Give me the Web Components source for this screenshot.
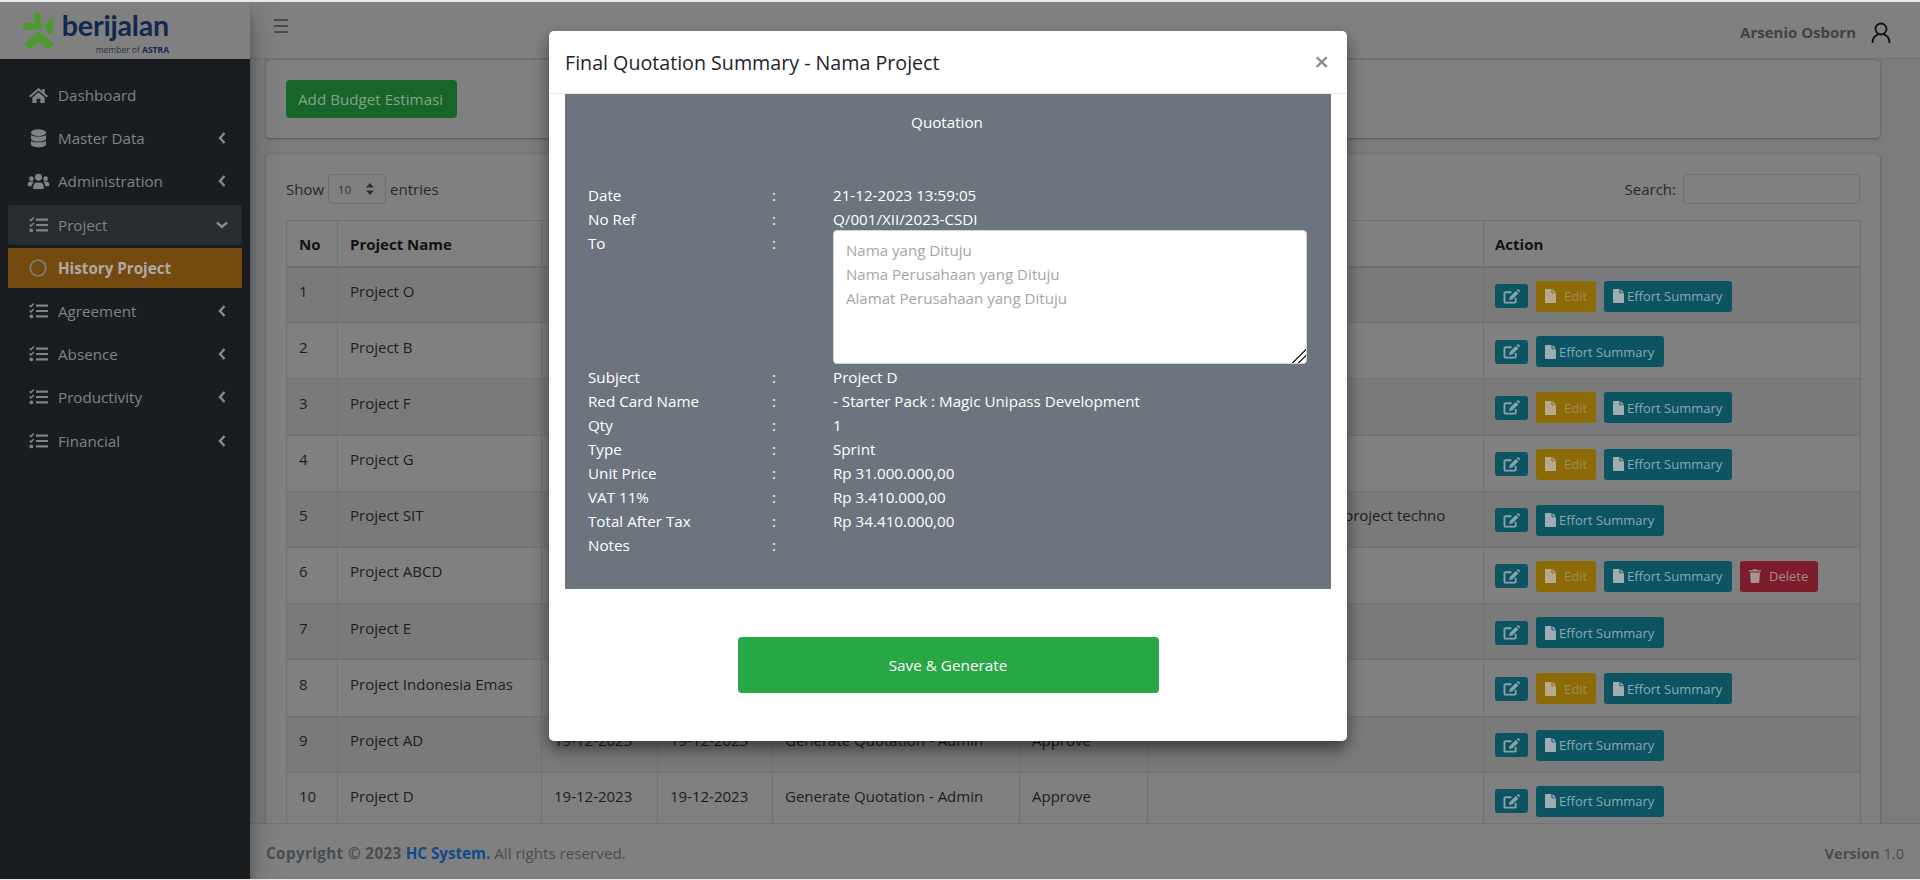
<!DOCTYPE html>
<html>
<head>
<meta charset="utf-8">
<title>Budget Estimasi</title>
<style>
  html, body { margin: 0; height: 100%; overflow: hidden; background: #e8e8e8; }
  body { font-family: "Open Sans", "Noto Sans", sans-serif; font-size: 15px; color: #1b1e21; }
</style>
</head>
<body>
<app-shell>
  <side-bar slot="sidebar">
    <nav-item icon="home">Dashboard</nav-item>
    <nav-item icon="database" arrow="left">Master Data</nav-item>
    <nav-item icon="users" arrow="left">Administration</nav-item>
    <nav-item icon="tasks" arrow="down" state="open">Project</nav-item>
    <nav-item icon="circle" state="active">History Project</nav-item>
    <nav-item icon="tasks" arrow="left">Agreement</nav-item>
    <nav-item icon="tasks" arrow="left">Absence</nav-item>
    <nav-item icon="tasks" arrow="left">Productivity</nav-item>
    <nav-item icon="tasks" arrow="left">Financial</nav-item>
  </side-bar>
  <top-bar slot="topbar">Arsenio Osborn</top-bar>
  <page-content slot="content">
    <ui-card><add-button>Add Budget Estimasi</add-button></ui-card>
    <ui-card>
      <entries-bar></entries-bar>
      <project-table></project-table>
    </ui-card>
  </page-content>
  <app-footer slot="footer"></app-footer>
</app-shell>

<quote-modal heading="Final Quotation Summary - Nama Project">
  <quote-row label="Date">21-12-2023 13:59:05</quote-row>
  <quote-row label="No Ref">Q/001/XII/2023-CSDI</quote-row>
  <quote-row label="To" tall>
    <address-box>
      <div>Nama yang Dituju</div>
      <div>Nama Perusahaan yang Dituju</div>
      <div>Alamat Perusahaan yang Dituju</div>
    </address-box>
  </quote-row>
  <quote-row label="Subject">Project D</quote-row>
  <quote-row label="Red Card Name">- Starter Pack : Magic Unipass Development</quote-row>
  <quote-row label="Qty">1</quote-row>
  <quote-row label="Type">Sprint</quote-row>
  <quote-row label="Unit Price">Rp 31.000.000,00</quote-row>
  <quote-row label="VAT 11%">Rp 3.410.000,00</quote-row>
  <quote-row label="Total After Tax">Rp 34.410.000,00</quote-row>
  <quote-row label="Notes"></quote-row>
</quote-modal>

<script>
const ICONS = {
  home: '<svg viewBox="0 0 22 18" width="21" height="17"><path d="M11 1 1 9.5l1.3 1.5L11 3.6l8.7 7.4L21 9.500l-3.500-3V2h-2.600v2.200z"/><path d="M4.500 11 11 5.600 17.500 11v6H13v-4.500H9V17H4.500z"/></svg>',
  database: '<svg viewBox="0 0 18 20" width="17" height="19"><ellipse cx="9" cy="3.800" rx="8" ry="3.500"/><path d="M1 6.300c2 2.200 14 2.200 16 0V10c0 1.900-3.500 3.300-8 3.300S1 11.900 1 10z"/><path d="M1 12.300c2 2.200 14 2.200 16 0v3.900c0 1.900-3.500 3.300-8 3.300s-8-1.400-8-3.300z"/></svg>',
  users: '<svg viewBox="0 0 24 18" width="23" height="17"><circle cx="12" cy="4.500" r="3.700"/><circle cx="4.500" cy="6" r="2.500"/><circle cx="19.500" cy="6" r="2.500"/><path d="M6.500 17v-2.500c0-3 2-4.500 4-4.500h3c2 0 4 1.500 4 4.500V17z"/><path d="M.5 12.500c0-2 1-3.500 3-3.500h2c.6 0 1.200.2 1.600.5-1.500 1.100-2.300 2.800-2.300 4.500H1.500c-.6 0-1-.5-1-1.500z"/><path d="M23.500 12.500c0-2-1-3.500-3-3.500h-2c-.6 0-1.200.2-1.600.5 1.500 1.100 2.300 2.800 2.300 4.500h3.300c.6 0 1-.5 1-1.500z"/></svg>',
  tasks: '<svg viewBox="0 0 19 16" width="19" height="16"><path d="M7 1.500h12v2.200H7zM7 6.900h12v2.200H7zM7 12.300h12v2.200H7z"/><path d="M.6 2.200 2 3.600 4.800.6M.6 7.600 2 9 4.800 6" fill="none" stroke="currentColor" stroke-width="1.500"/><circle cx="2.300" cy="13.400" r="1.900"/></svg>',
  circle: '<svg viewBox="0 0 18 18" width="18" height="18"><circle cx="9" cy="9" r="7.800" fill="none" stroke="currentColor" stroke-width="1.800"/></svg>',
  edit: '<svg viewBox="0 0 18 16" width="17" height="15"><path d="M13.500 9.500v4a1 1 0 0 1-1 1H2.500a1 1 0 0 1-1-1V4.500a1 1 0 0 1 1-1h6.500" fill="none" stroke="currentColor" stroke-width="2"/><path d="M6.500 11.800 7 8.600 13.700 2l2.700 2.700-6.700 6.600zM14.600 1.200l.8-.8a1 1 0 0 1 1.300 0l1 1a1 1 0 0 1 0 1.300l-.8.800z"/></svg>',
  file: '<svg viewBox="0 0 11 14" width="11" height="14"><path d="M0 1a1 1 0 0 1 1-1h5.500v3.500a.8.8 0 0 0 .8.800H11V13a1 1 0 0 1-1 1H1a1 1 0 0 1-1-1z"/><path d="M7.500 0 11 3.400H7.500z"/></svg>',
  trash: '<svg viewBox="0 0 12 14" width="12" height="14"><path d="M1 3.500h10L10.300 13a1 1 0 0 1-1 1H2.700a1 1 0 0 1-1-1zM0 1.300h3.800l.5-1h3.400l.5 1H12v1.300H0z"/></svg>'
};

// every element renders once, when it lands in the page
class ShadowBase extends HTMLElement {
  connectedCallback() {
    if (this.shadowRoot) return;
    this.attachShadow({ mode: 'open' }).innerHTML = this.render();
  }
}

class AppShell extends ShadowBase {
  render() {
    return `<style>
      :host { display: grid; grid-template-columns: 250px 1fr; grid-template-rows: 57px 1fr 56px; height: 877px; margin-top: 2px; background: #7a7b7c; overflow: hidden; }
      ::slotted([slot=sidebar]) { grid-row: 1 / 4; grid-column: 1; z-index: 2; }
      ::slotted([slot=topbar]) { grid-row: 1; grid-column: 2; }
      ::slotted([slot=content]) { grid-row: 2; grid-column: 2; }
      ::slotted([slot=footer]) { grid-row: 3; grid-column: 2; }
    </style><slot name="sidebar"></slot><slot name="topbar"></slot><slot name="content"></slot><slot name="footer"></slot>`;
  }
}

class SideBar extends ShadowBase {
  render() {
    return `<style>
      :host { display: flex; flex-direction: column; background: #1a1d20; box-shadow: 0 14px 28px rgba(0,0,0,.25), 0 10px 10px rgba(0,0,0,.22); }
      .brand { height: 57px; background: #808080; display: flex; gap: 7px; padding-left: 23px; box-sizing: border-box; }
      .mark { margin-top: 10px; }
      .words { display: flex; flex-direction: column; align-items: flex-end; width: 107px; }
      .name { font: 700 28.600px/32px Lato, sans-serif; color: #12294f; margin-top: 7px; letter-spacing: -.2px; }
      .member { font: 400 8.500px/12px "Open Sans", sans-serif; color: #2a3242; margin-top: 3px; }
      .member b { color: #12294f; }
      nav { display: flex; flex-direction: column; gap: 3.200px; padding: 16px 8px; }
    </style>
    <div class="brand">
      <svg class="mark" width="32" height="38" viewBox="0 0 32 38" fill="#4f9a30">
        <path d="M11 1h7v17h-8.500v-6H11z"/><path d="M0 11h11v7H0z"/>
        <path d="M30 4v18h-4.500L21 14z"/>
        <path d="M16 19 31 32l-5.500 6L16 29.500 6.500 38 1 32z"/>
      </svg>
      <div class="words"><span class="name">berijalan</span><span class="member">member of <b>ASTRA</b></span></div>
    </div>
    <nav><slot></slot></nav>`;
  }
}

class NavItem extends ShadowBase {
  render() {
    const arrow = this.getAttribute('arrow');
    const chevron = arrow === 'left'
      ? '<svg class="arrow" viewBox="-2 0 12 12" width="12" height="12"><path d="M6.500 1 2 6l4.500 5" fill="none" stroke="currentColor" stroke-width="2.400"/></svg>'
      : arrow === 'down'
        ? '<svg class="arrow" viewBox="0 -2 12 12" width="12" height="12"><path d="M1 1.500 6 6l5-4.500" fill="none" stroke="currentColor" stroke-width="2.400"/></svg>'
        : '';
    return `<style>
      :host { display: flex; align-items: center; height: 40px; box-sizing: border-box; padding-left: 16px; color: #808285; border-radius: 3px; font-size: 15.200px; }
      :host([state=open]) { background: #272c2f; }
      :host([state=active]) { background: #754a0e; color: #ababab; font-weight: 700; border-radius: 0; }
      .icon { width: 28px; margin-right: 6px; display: flex; justify-content: center; fill: currentColor; flex: none; }
      :host([state=active]) .icon { color: #7d7d7d; }
      .label { flex: 1; }
      .arrow { margin-right: 14px; color: #8a8a8a; }
    </style><span class="icon">${ICONS[this.getAttribute('icon')]}</span><span class="label"><slot></slot></span>${chevron}`;
  }
}

class TopBar extends ShadowBase {
  render() {
    return `<style>
      :host { display: flex; align-items: flex-start; justify-content: space-between; background: #808080; border-bottom: 1px solid #6f7173; box-sizing: border-box; padding: 0 29px 0 24px; }
      .burger { width: 14px; margin-top: 17px; display: flex; flex-direction: column; gap: 4px; }
      .burger i { display: block; height: 2px; background: #4a4a4a; }
      .user { display: flex; align-items: flex-start; gap: 15px; margin-top: 20px; font-weight: 700; font-size: 15px; color: #3f4245; line-height: 20px; }
    </style>
    <div class="burger"><i></i><i></i><i></i></div>
    <div class="user"><span><slot></slot></span>
      <svg width="20" height="22" viewBox="0 0 20 22" fill="none" stroke="#101010" stroke-width="1.800"><circle cx="10" cy="7" r="5.500"/><path d="M1.500 21c0-5 3-7.500 5.500-8.300M18.500 21c0-5-3-7.500-5.500-8.300"/></svg>
    </div>`;
  }
}

class PageContent extends ShadowBase {
  render() {
    return `<style>
      :host { display: flex; flex-direction: column; gap: 16px; padding: 1px 40px 0 16px; overflow: hidden; min-height: 0; }
    </style><slot></slot>`;
  }
}

class UiCard extends ShadowBase {
  render() {
    return `<style>
      :host { display: block; flex: none; background: #808080; border-radius: 4px; padding: 20px; box-shadow: 0 0 1px rgba(0,0,0,.25), 0 1px 3px rgba(0,0,0,.3); }
    </style><slot></slot>`;
  }
}

class AddButton extends ShadowBase {
  render() {
    return `<style>
      :host { display: inline-flex; align-items: center; height: 38px; padding: 0 12px; box-sizing: border-box; width: 171px; background: #186529; color: #83a48c; border-radius: 4px; font-size: 15.200px; white-space: nowrap; }
    </style><slot></slot>`;
  }
}

class EntriesBar extends ShadowBase {
  render() {
    return `<style>
      :host { display: flex; justify-content: space-between; align-items: center; height: 30px; margin-bottom: 16px; font-size: 15px; color: #26292c; }
      .side { display: flex; align-items: center; gap: 4px; }
      .box { box-sizing: border-box; height: 30px; border: 1px solid #6f7173; border-radius: 3px; }
      .select { width: 58px; display: flex; align-items: center; justify-content: space-between; padding: 0 11px 0 9px; font-size: 11.500px; color: #34373a; }
      .input { width: 177px; margin-left: 3px; }
    </style>
    <div class="side">Show <span class="box select">10
      <svg width="8" height="12" viewBox="0 0 8 12" fill="#2a2d30"><path d="M4 0 8 4.600H0zM4 12 0 7.400h8z"/></svg></span> entries</div>
    <div class="side">Search: <span class="box input"></span></div>`;
  }
}

class ActionBtn extends ShadowBase {
  render() {
    return `<style>
      :host { display: inline-flex; align-items: center; box-sizing: border-box; height: 31px; border-radius: 3px; white-space: nowrap; font-size: 13px; padding-left: 9px; gap: 3px; }
      :host([kind=square]) { height: 24px; width: 33px; background: #0d5462; color: #8ba1a7; padding: 0; justify-content: center; }
      :host([kind=info]) { width: 128px; background: #0d5462; color: #8aaab2; }
      :host([kind=warn]) { width: 60px; background: #8c6a07; color: #a08a55; gap: 8px; }
      :host([kind=danger]) { width: 78px; background: #7d1c2a; color: #ad878e; gap: 8px; }
      svg { fill: #a1acb0; flex: none; }
      :host([kind=square]) svg { fill: #8ba1a7; }
      :host([kind=warn]) svg { fill: #b5ac90; }
      :host([kind=danger]) svg { fill: #a89296; }
    </style>${ICONS[this.getAttribute('icon')]}<slot></slot>`;
  }
}

class ProjectTable extends ShadowBase {
  render() {
    // cols that sit behind the modal only hold data where they show under it
    const rows = [
      [1, 'Project O', true], [2, 'Project B'], [3, 'Project F', true], [4, 'Project G', true],
      [5, 'Project SIT'], [6, 'Project ABCD', true, true], [7, 'Project E'],
      [8, 'Project Indonesia Emas', true], [9, 'Project AD'], [10, 'Project D']
    ];
    const body = rows.map(([no, name, edit, del]) => {
      const full = no >= 9;
      const info = full ? ['19-12-2023', '19-12-2023', 'Generate Quotation - Admin', 'Approve'] : ['', '', '', ''];
      const note = no === 5 ? '<span class="note">project techno</span>' : '';
      return `<tr><td>${no}</td><td>${name}</td>${info.map(v => `<td>${v}</td>`).join('')}<td>${note}</td>
        <td class="act"><div>
          <action-btn kind="square" icon="edit"></action-btn>
          ${edit ? '<action-btn kind="warn" icon="file">Edit</action-btn>' : ''}
          <action-btn kind="info" icon="file">Effort Summary</action-btn>
          ${del ? '<action-btn kind="danger" icon="trash">Delete</action-btn>' : ''}
        </div></td></tr>`;
    }).join('');
    return `<style>
      :host { display: block; }
      table { border-collapse: collapse; table-layout: fixed; width: 1574px; font-size: 15px; color: #1b1e21; }
      th, td { border: 1px solid #6f7173; padding: 11.500px 12px 12px; line-height: 24px; text-align: left; vertical-align: top; }
      th { height: 46px; box-sizing: border-box; padding: 11px 11px 9px 12px; vertical-align: middle; border-bottom-width: 2px; color: #101214; }
      th:last-child { padding-left: 11px; }
      td { height: 56.200px; box-sizing: border-box; }
      tr:nth-child(odd) td { background: #7a7a7a; }
      .note { display: inline-block; padding-left: 184px; white-space: nowrap; }
      .act { padding: 13px 11px 0; }
      .act div { display: flex; align-items: center; gap: 8px; }
    </style>
    <table>
      <colgroup><col width="51"><col width="204"><col width="116"><col width="115"><col width="247"><col width="128"><col width="336"><col width="377"></colgroup>
      <thead><tr><th>No</th><th>Project Name</th><th></th><th></th><th></th><th></th><th></th><th>Action</th></tr></thead>
      <tbody>${body}</tbody>
    </table>`;
  }
}

class AppFooter extends ShadowBase {
  render() {
    return `<style>
      :host { display: flex; align-items: center; justify-content: space-between; background: #808080; border-top: 1px solid #6f7173; box-sizing: border-box; padding: 3px 16px 0; font-size: 15.200px; color: #494c50; z-index: 1; }
      a { color: #0f4a8a; font-weight: 700; }
      b { font-weight: 700; }
      .lead { letter-spacing: .4px; }
      .ver { font-size: 14.600px; }
    </style>
    <div><b><span class="lead">Copyright © 2023</span> <a>HC System.</a></b> All rights reserved.</div>
    <div class="ver"><b>Version</b> 1.0</div>`;
  }
}

class QuoteModal extends ShadowBase {
  render() {
    return `<style>
      :host { position: absolute; left: 549px; top: 31px; width: 798px; height: 710px; display: flex; flex-direction: column; background: #fff; border-radius: 5px; box-shadow: 0 8px 16px rgba(0,0,0,.5); z-index: 10; }
      header { height: 63px; flex: none; box-sizing: border-box; border-bottom: 1px solid #e9ecef; display: flex; align-items: center; justify-content: space-between; padding: 0 18px 0 16px; }
      h5 { margin: 0; font-size: 19.650px; font-weight: 400; color: #212529; }
      .close { font-size: 26px; line-height: 24px; font-weight: 600; color: #8a8a8a; margin-top: -2px; }
      .panel { margin: 0 16px; background: #6c757d; color: #fff; font-size: 15.200px; line-height: 24px; padding: 16px 0 32px 23px; flex: none; }
      h6 { margin: 0 0 49px -23px; font-size: inherit; font-weight: 400; text-align: center; padding-right: 2px; }
      .save { margin: 48px auto 0; width: 421px; height: 56px; background: #28a745; color: #fff; border-radius: 4px; display: flex; align-items: center; justify-content: center; font-size: 15.300px; }
    </style>
    <header><h5>${this.getAttribute('heading')}</h5><span class="close">×</span></header>
    <section class="panel"><h6>Quotation</h6><slot></slot></section>
    <div class="save">Save &amp; Generate</div>`;
  }
}

class QuoteRow extends ShadowBase {
  render() {
    return `<style>
      :host { display: grid; grid-template-columns: 184px 61px 474px; height: 24px; }
      :host([tall]) { height: 134px; }
    </style><span>${this.getAttribute('label')}</span><span>:</span><div><slot></slot></div>`;
  }
}

class AddressBox extends ShadowBase {
  render() {
    return `<style>
      :host { display: block; box-sizing: border-box; width: 474px; height: 134px; margin-top: -1px; padding: 7px 12px; background: #fff; border: 1px solid #ced4da; border-radius: 4px; color: #a2a6aa; line-height: 24px; font-size: 15.100px; resize: both; overflow: auto; }
      :host::-webkit-resizer { background: linear-gradient(135deg, transparent 0 52%, #333 52% 59%, transparent 59% 72%, #333 72% 79%, transparent 79%); }
    </style><slot></slot>`;
  }
}

customElements.define('app-shell', AppShell);
customElements.define('side-bar', SideBar);
customElements.define('nav-item', NavItem);
customElements.define('top-bar', TopBar);
customElements.define('page-content', PageContent);
customElements.define('ui-card', UiCard);
customElements.define('add-button', AddButton);
customElements.define('entries-bar', EntriesBar);
customElements.define('action-btn', ActionBtn);
customElements.define('project-table', ProjectTable);
customElements.define('app-footer', AppFooter);
customElements.define('quote-modal', QuoteModal);
customElements.define('quote-row', QuoteRow);
customElements.define('address-box', AddressBox);
</script>
</body>
</html>
